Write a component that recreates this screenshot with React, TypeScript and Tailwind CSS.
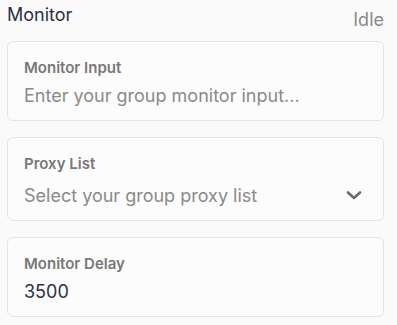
import React from "react";

export default function App() {
  return (
    <div
      className="w-[397px] h-[325px] bg-[#fafafa] overflow-hidden"
      style={{ fontFamily: "Inter, 'Noto Sans', sans-serif" }}
    >
      <div className="ml-[7px] w-[377px]">
        <div className="flex items-start justify-between h-[41px]">
          <div className="mt-px text-[18px] leading-[28px] text-[#2a3142]">Monitor</div>
          <div className="mt-[8px] text-[18px] leading-[24px] text-[#8a8a8a]">Idle</div>
        </div>

        <div className="rounded-md border border-[#e4e4e4] bg-[#fcfcfc] px-4 pt-4 pb-3">
          <div className="text-[15px] leading-[20px] font-semibold text-[#787878]">Monitor Input</div>
          <input
            className="mt-[6px] block w-full bg-transparent outline-none text-[18px] leading-[24px] h-[24px] text-[#2b3044] placeholder:text-[#8a8a8a]"
            placeholder="Enter your group monitor input..."
          />
        </div>

        <div className="mt-4 rounded-md border border-[#e4e4e4] bg-[#fcfcfc] pl-4 pr-[21px] pt-4 pb-3">
          <div className="text-[15px] leading-[20px] font-semibold text-[#787878]">Proxy List</div>
          <div className="mt-[10px] flex items-center justify-between h-[24px]">
            <span className="text-[18px] leading-[24px] text-[#8a8a8a]">Select your group proxy list</span>
            <svg width="16" height="10" viewBox="0 0 16 10" className="block -mt-[2px]">
              <polyline
                points="2,2.5 8,8 14,2.5"
                fill="none"
                stroke="#6b6b6b"
                strokeWidth="2.6"
                strokeLinecap="round"
                strokeLinejoin="round"
              />
            </svg>
          </div>
        </div>

        <div className="mt-4 rounded-md border border-[#e4e4e4] bg-[#fcfcfc] px-4 pt-4 pb-3">
          <div className="text-[15px] leading-[20px] font-semibold text-[#787878]">Monitor Delay</div>
          <input
            className="mt-[6px] block w-full bg-transparent outline-none text-[18px] leading-[24px] h-[24px] text-[#2b3044]"
            defaultValue="3500"
          />
        </div>
      </div>
    </div>
  );
}
